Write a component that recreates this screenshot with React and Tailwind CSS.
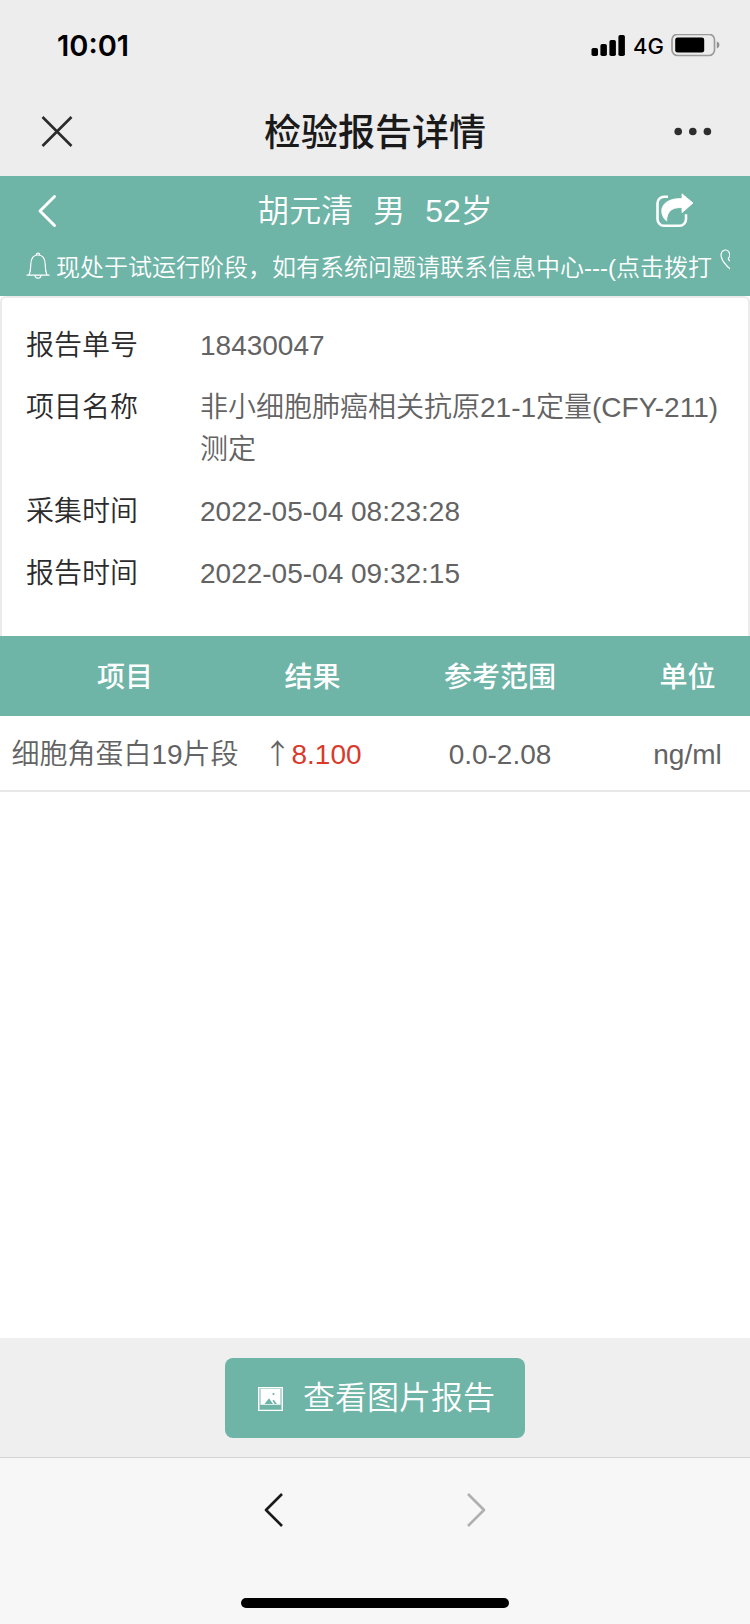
const details = [
  { label: "报告单号", value: "18430047" },
  { label: "项目名称", value: "非小细胞肺癌相关抗原21-1定量(CFY-211)测定" },
  { label: "采集时间", value: "2022-05-04 08:23:28" },
  { label: "报告时间", value: "2022-05-04 09:32:15" },
];

const results = [
  { name: "细胞角蛋白19片段", flag: "↑", value: "8.100", range: "0.0-2.08", unit: "ng/ml" },
];

function StatusBar() {
  return (
    <div className="flex h-22 items-center justify-between pt-1 pr-[30px] pl-[57px] text-black">
      <span className="font-['Inter',sans-serif] text-[29px] leading-9 font-semibold">10:01</span>
      <div className="flex items-center gap-[7px]">
        <svg className="h-[22px] w-[35px]" viewBox="0 0 35 22" aria-hidden="true">
          <rect x="0.5" y="13" width="6.5" height="8" rx="1.8" />
          <rect x="9.4" y="9" width="6.5" height="12" rx="1.8" />
          <rect x="18.4" y="5" width="6.5" height="16" rx="1.8" />
          <rect x="27.4" y="0" width="6.5" height="21" rx="1.8" />
        </svg>
        <span className="font-['Inter',sans-serif] text-[22px] leading-7 font-medium">4G</span>
        <svg className="h-6 w-[49px]" viewBox="0 0 49 24" aria-hidden="true">
          <rect x="1" y="0.3" width="42.5" height="21.2" rx="5.5" fill="none" stroke="#9b9b9b" strokeWidth="1.7" />
          <rect x="4.2" y="3.4" width="29" height="15.2" rx="2.4" />
          <path d="M45.8 7.6c1.8.6 2.6 1.8 2.6 3.4s-.8 2.8-2.6 3.4z" fill="#8f8f8f" />
        </svg>
      </div>
    </div>
  );
}

function TitleBar() {
  return (
    <div className="grid h-22 grid-cols-[1fr_auto_1fr] items-center">
      <button type="button" aria-label="关闭" className="ml-10 w-[34px] text-[#2b2b2b]">
        <svg className="h-[34px] w-[34px]" viewBox="0 0 34 34" fill="none" stroke="currentColor" strokeWidth="2.6" aria-hidden="true">
          <path d="M2.5 2l29 29M31.5 2l-29 29" />
        </svg>
      </button>
      <h1 className="pt-1 text-[37px] leading-12 font-medium text-[#1a1a1a]">检验报告详情</h1>
      <button type="button" aria-label="更多" className="mr-9 justify-self-end text-[#2e2e2e]">
        <svg className="h-10 w-10" viewBox="0 0 40 40" fill="currentColor" aria-hidden="true">
          <circle cx="4.2" cy="19.5" r="3.8" />
          <circle cx="18.8" cy="19.5" r="3.8" />
          <circle cx="33.4" cy="19.5" r="3.8" />
        </svg>
      </button>
    </div>
  );
}

function PatientHeader() {
  return (
    <div className="bg-[#6eb4a7] text-white">
      <div className="grid h-[70px] grid-cols-[1fr_auto_1fr] items-center">
        <button type="button" aria-label="返回" className="ml-9 w-6">
          <svg className="h-9 w-6" viewBox="0 0 24 36" fill="none" stroke="currentColor" strokeWidth="3" strokeLinecap="round" strokeLinejoin="round" aria-hidden="true">
            <path d="M18.500 3.500L4 18l14.500 14.500" />
          </svg>
        </button>
        <h2 className="flex gap-5 text-[32px] leading-10 font-[350]">
          <span>胡元清</span>
          <span>男</span>
          <span>52岁</span>
        </h2>
        <button type="button" aria-label="分享" className="mr-14 justify-self-end">
          <svg className="h-9 w-[38px]" viewBox="0 0 38 36" aria-hidden="true">
            <path d="M12 3.700H8A6.500 6.500 0 0 0 1.500 10.200v16A6.500 6.500 0 0 0 8 32.700h15.500a6.500 6.500 0 0 0 6.500-6.500v-5" fill="none" stroke="currentColor" strokeWidth="2.600" />
            <path d="M26 .8l11 9.200-11 9.700v-5.200c-9 0-15 2.500-15.400 13.500C7 25 5 20 6 15.500 8 8.500 16 5.200 26 5.600z" fill="currentColor" stroke="currentColor" strokeWidth=".8" strokeLinejoin="round" />
          </svg>
        </button>
      </div>
      <a href="#call" className="mr-5 flex h-[50px] items-start gap-1 overflow-hidden pl-[26px]">
        <svg className="mt-1.5 h-7 w-[26px] shrink-0" viewBox="0 0 26 28" fill="none" stroke="currentColor" strokeWidth="1.2" aria-hidden="true">
          <path d="M0.500 23.200h23M3.100 23c1.200-3 1.600-6 1.700-10.500C4.900 6.400 7.500 3 12 3s7.100 3.400 7.200 9.500c.1 4.500.5 7.500 1.700 10.500M10.300 2.900c0-2.300 3.400-2.300 3.400 0M9.100 23.700c.3 3.200 5.500 3.200 5.800 0" />
        </svg>
        <span className="shrink-0 pt-0.5 text-[24px] leading-10 font-[350] whitespace-nowrap">
          现处于试运行阶段，如有系统问题请联系信息中心---(点击拨打
        </span>
        <svg className="mt-[3px] ml-1 h-6 w-6 shrink-0" viewBox="0 0 24 24" fill="none" stroke="currentColor" strokeWidth="1.200" aria-hidden="true">
          <path d="M10 6.500C9.500 3 7.500.8 5 1 2 1.400.5 4.500 1.300 8c1.200 4.500 5.200 9 9.700 12.500 3 2 6 2.300 8.500.8 2.500-1.600 2.400-3.300.2-4.800-2.200-1.400-3.800-1.300-5.200.2-1.500-1-3-2.400-4-4.200-2.500-2-2.700-3-1.500-4z" />
        </svg>
      </a>
    </div>
  );
}

function ReportInfo() {
  return (
    <dl className="mx-[2px] mt-[2px] rounded-t bg-white px-6 pt-[17px] pb-[31px] shadow-[0_0_0_2px_#ebebeb]">
      {details.map((item) => (
        <div key={item.label} className="flex py-2.5 text-[28px] leading-[42px] font-[350]">
          <dt className="w-[174px] shrink-0 text-[#2b2b2b]">{item.label}</dt>
          <dd className="min-w-0 flex-1 break-all text-[#636363]">{item.value}</dd>
        </div>
      ))}
    </dl>
  );
}

function ResultTable() {
  return (
    <table className="relative w-full table-fixed border-separate border-spacing-0 text-center text-[28px] leading-[42px]">
      <colgroup>
        <col className="w-2/6" />
        <col className="w-1/6" />
        <col className="w-2/6" />
        <col className="w-1/6" />
      </colgroup>
      <thead className="bg-[#6eb4a7] text-white">
        <tr className="h-20">
          {["项目", "结果", "参考范围", "单位"].map((title) => (
            <th key={title} scope="col" className="pt-1 font-medium">{title}</th>
          ))}
        </tr>
      </thead>
      <tbody className="bg-white font-[350] text-[#636363]">
        {results.map((row) => (
          <tr key={row.name} className="h-[76px] *:border-b-2 *:border-[#e8e8e8] *:pt-1">
            <td className="whitespace-nowrap">{row.name}</td>
            <td className="whitespace-nowrap">
              <span className="font-['Noto_Sans_CJK_SC',sans-serif] leading-none">{row.flag}</span>
              <span className="text-[#d93a2b]">{row.value}</span>
            </td>
            <td>{row.range}</td>
            <td>{row.unit}</td>
          </tr>
        ))}
      </tbody>
    </table>
  );
}

function ReportAction() {
  return (
    <div className="flex h-[119px] items-center justify-center bg-[#efefef]">
      <button type="button" className="flex h-20 w-[300px] items-center justify-center gap-4 rounded-lg bg-[#6eb4a7] text-[32px] leading-10 font-[350] text-white">
        <svg className="h-8 w-8" viewBox="0 0 32 32" aria-hidden="true">
          <rect x="3" y="5" width="25" height="24" fill="#b7dad3" />
          <rect x="3.500" y="5.500" width="24" height="23" fill="none" stroke="currentColor" />
          <rect x="6" y="7" width="19" height="15.500" fill="currentColor" />
          <rect x="5" y="23" width="21" height="4.500" fill="#6eb4a7" />
          <path d="M9.500 22l4.500-5.700 4 5.700zM17.500 18.500l1.300-.8 3.200 4.300h-2.400z" fill="#6eb4a7" />
          <circle cx="18.500" cy="12" r="1.100" fill="#6eb4a7" />
        </svg>
        <span>查看图片报告</span>
      </button>
    </div>
  );
}

function BrowserBar() {
  return (
    <nav className="flex h-[167px] flex-col items-center justify-between border-t border-[#d4d4d4] bg-[#f7f7f7] pb-4">
      <div className="flex h-26 items-center gap-[178px]">
        <button type="button" aria-label="后退" className="text-[#1a1a1a]">
          <svg className="h-10 w-6" viewBox="0 0 24 40" fill="none" stroke="currentColor" strokeWidth="2.600" strokeLinejoin="round" aria-hidden="true">
            <path d="M20 4L4 20l16 16" />
          </svg>
        </button>
        <button type="button" aria-label="前进" disabled className="text-[#b0b0b0]">
          <svg className="h-10 w-6" viewBox="0 0 24 40" fill="none" stroke="currentColor" strokeWidth="2.600" strokeLinejoin="round" aria-hidden="true">
            <path d="M4 4l16 16L4 36" />
          </svg>
        </button>
      </div>
      <div className="h-2.5 w-[268px] rounded-full bg-black" />
    </nav>
  );
}

export default function App() {
  return (
    <div className="flex min-h-screen flex-col bg-white font-['Liberation_Sans','Noto_Sans_CJK_SC',sans-serif]">
      <header>
        <div className="bg-[#ededed]">
          <StatusBar />
          <TitleBar />
        </div>
        <PatientHeader />
      </header>
      <main className="flex-1">
        <ReportInfo />
        <ResultTable />
      </main>
      <footer>
        <ReportAction />
        <BrowserBar />
      </footer>
    </div>
  );
}
